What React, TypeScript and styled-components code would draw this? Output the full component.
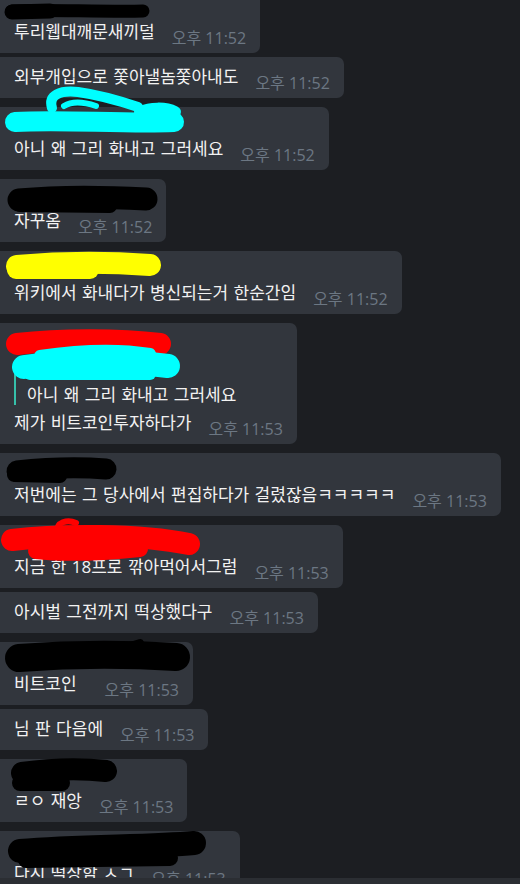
import React from "react";
import styled, { createGlobalStyle } from "styled-components";

const GlobalStyle = createGlobalStyle`
  html, body { margin: 0; padding: 0; background: #1c1e22; overflow: hidden; }
  #root { width: 520px; height: 884px; }
`;

const Screen = styled.div`
  width: 520px;
  height: 884px;
  display: flex;
  flex-direction: column;
  background: #1c1e22;
  font-family: "Open Sans", "Noto Sans CJK KR", sans-serif;
`;

const Chat = styled.div`
  flex: 1;
  overflow: hidden;
`;

const List = styled.div`
  display: flex;
  flex-direction: column;
  margin-top: -10px;
`;

const InputBar = styled.div`
  height: 6px;
  background: #2b2e33;
`;

const Bubble = styled.div<{ $grouped?: boolean }>`
  position: relative;
  align-self: flex-start;
  display: flex;
  flex-direction: column;
  margin: ${(p) => (p.$grouped ? "4px" : "9px")} 0 0 -8px;
  padding: 10px 14px 11px 22px;
  border-radius: 7px;
  background: #32363d;
  &:first-child {
    margin-top: 0;
  }
`;

const NameRow = styled.div<{ $width: number }>`
  width: ${(p) => p.$width}px;
  height: 20px;
  margin-bottom: 2px;
`;

const Reply = styled.div`
  display: flex;
  flex-direction: column;
  margin: 8px 0 8px;
  padding-left: 11px;
  border-left: 2px solid #36c0aa;
`;

const ReplyName = styled.div`
  height: 21px;
`;

const ReplyText = styled.div`
  height: 21px;
  font-size: 17px;
  line-height: 21px;
  word-spacing: 1px;
  color: #f2f2f2;
  white-space: nowrap;
`;

const Body = styled.div`
  display: flex;
  align-items: flex-end;
  justify-content: space-between;
  height: 20px;
`;

const Text = styled.span`
  height: 20px;
  font-size: 17px;
  line-height: 20px;
  word-spacing: 1px;
  color: #f2f2f2;
  white-space: nowrap;
`;

const Time = styled.span`
  height: 20px;
  margin: 0 0 -6px 17px;
  font-size: 16px;
  line-height: 20px;
  color: #6c7783;
  white-space: nowrap;
`;

const Scribble = styled.svg`
  position: absolute;
  left: 8px;
  top: 0;
  overflow: visible;
  pointer-events: none;
`;

type Stroke = { d: string; w: number; c: string };

type Msg = {
  top: number;
  grouped?: boolean;
  name?: number;
  reply?: string;
  text: string;
  time: string;
  marks?: Stroke[];
};

const K = "#000000";
const C = "#00ffff";
const Y = "#ffff00";
const R = "#ff0000";

const messages: Msg[] = [
  {
    top: -10,
    name: 100,
    text: "투리웹대깨문새끼덜",
    time: "오후 11:52",
    marks: [
      { d: "M12 11 C40 9 100 12 143 11", w: 13, c: K },
      { d: "M12 12 L50 11", w: 15, c: K },
    ],
  },
  { top: 57, grouped: true, text: "외부개입으로 쫓아낼놈쫓아내도", time: "오후 11:52" },
  {
    top: 107,
    name: 100,
    text: "아니 왜 그리 화내고 그러세요",
    time: "오후 11:52",
    marks: [
      { d: "M15 122 C60 119 120 124 174 122", w: 20, c: C },
      { d: "M140 112 C150 108 165 107 175 112", w: 12, c: C },
      { d: "M52 108 C48 95 60 90 78 92 C100 95 120 101 138 107", w: 10, c: C },
      { d: "M64 106 C72 101 84 102 96 106", w: 6, c: C },
    ],
  },
  {
    top: 179,
    name: 100,
    text: "자꾸옴",
    time: "오후 11:52",
    marks: [
      { d: "M19 200 C60 196 110 197 146 199", w: 23, c: K },
      { d: "M20 205 L110 206", w: 14, c: K },
    ],
  },
  {
    top: 251,
    name: 100,
    text: "위키에서 화내다가 병신되는거 한순간임",
    time: "오후 11:52",
    marks: [
      { d: "M17 266 C60 262 110 262 150 265", w: 22, c: Y },
      { d: "M16 270 L90 270", w: 18, c: Y },
    ],
  },
  {
    top: 323,
    name: 100,
    reply: "아니 왜 그리 화내고 그러세요",
    text: "제가 비트코인투자하다가",
    time: "오후 11:53",
    marks: [
      { d: "M17 344 C60 339 120 339 160 344", w: 22, c: R },
      { d: "M24 367 C70 360 130 361 168 366", w: 24, c: C },
      { d: "M40 356 C80 350 120 349 150 354", w: 12, c: C },
      { d: "M30 374 L150 374", w: 12, c: C },
    ],
  },
  {
    top: 454,
    name: 100,
    text: "저번에는 그 당사에서 편집하다가 걸렸잖음ㅋㅋㅋㅋㅋ",
    time: "오후 11:53",
    marks: [
      { d: "M17 472 C45 469 80 468 106 470", w: 21, c: K },
      { d: "M14 476 L60 477", w: 14, c: K },
    ],
  },
  {
    top: 526,
    name: 100,
    text: "지금 한 18프로 깎아먹어서그럼",
    time: "오후 11:53",
    marks: [
      { d: "M12 541 C60 535 140 535 189 545", w: 22, c: R },
      { d: "M36 552 C70 556 110 553 140 550", w: 16, c: R },
      { d: "M58 533 C55 523 68 520 76 524", w: 6, c: R },
    ],
  },
  { top: 593, grouped: true, text: "아시벌 그전까지 떡상했다구", time: "오후 11:53" },
  {
    top: 643,
    name: 165,
    text: "비트코인",
    time: "오후 11:53",
    marks: [
      { d: "M19 659 C70 655 130 655 176 658", w: 28, c: K },
      { d: "M120 650 L140 644", w: 8, c: K },
    ],
  },
  { top: 708, grouped: true, text: "님 판 다음에", time: "오후 11:53" },
  {
    top: 758,
    name: 100,
    text: "ㄹㅇ 재앙",
    time: "오후 11:53",
    marks: [
      { d: "M22 772 C50 768 80 767 106 770", w: 22, c: K },
      { d: "M20 782 L62 782", w: 16, c: K },
    ],
  },
  {
    top: 830,
    name: 100,
    text: "다시 떡상함 ㅅㄱ",
    time: "오후 11:53",
    marks: [
      { d: "M20 850 C80 845 150 846 194 842", w: 24, c: K },
      { d: "M26 859 L170 857", w: 16, c: K },
    ],
  },
];

function Marks({ top, marks }: { top: number; marks: Stroke[] }) {
  return (
    <Scribble width={260} height={80} viewBox={`0 ${top} 260 80`}>
      {marks.map((m, i) => (
        <path
          key={i}
          d={m.d}
          stroke={m.c}
          strokeWidth={m.w}
          strokeLinecap="round"
          strokeLinejoin="round"
          fill="none"
        />
      ))}
    </Scribble>
  );
}

export default function App() {
  return (
    <>
      <GlobalStyle />
      <Screen>
        <Chat>
          <List>
            {messages.map((m, i) => (
              <Bubble key={i} $grouped={m.grouped}>
                {m.name !== undefined && <NameRow $width={m.name} />}
                {m.reply && (
                  <Reply>
                    <ReplyName />
                    <ReplyText>{m.reply}</ReplyText>
                  </Reply>
                )}
                <Body>
                  <Text>{m.text}</Text>
                  <Time>{m.time}</Time>
                </Body>
                {m.marks && <Marks top={m.top} marks={m.marks} />}
              </Bubble>
            ))}
          </List>
        </Chat>
        <InputBar />
      </Screen>
    </>
  );
}
